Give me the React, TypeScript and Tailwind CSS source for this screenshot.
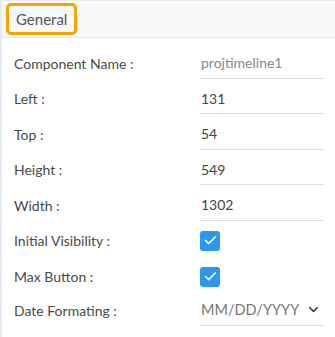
import { Check, ChevronDown } from "lucide-react";

const textRows = [
  { label: "Component Name :", value: "projtimeline1", muted: true },
  { label: "Left :", value: "131" },
  { label: "Top :", value: "54" },
  { label: "Height :", value: "549" },
  { label: "Width :", value: "1302" },
];

export default function App() {
  return (
    <div
      className="w-[335px] h-[337px] bg-white border-l-2 border-[#e3ecf3] text-[14px] text-[#4a4a4a] overflow-hidden"
      style={{ fontFamily: "Lato, 'Noto Sans', sans-serif" }}
    >
      <div className="h-[38px] bg-[#f9f9f9] border-t border-b border-[#e6eaec] flex items-center pl-1">
        <div className="h-[32px] px-[7px] flex items-center border-[3px] border-[#f5a400] rounded-[5px] text-[15px] text-[#555]">
          General
        </div>
      </div>

      <div className="pl-3 pr-[11px] pt-[5px]">
        {textRows.map((r) => (
          <div key={r.label} className="h-[35.5px] flex items-end">
            <div className="w-[186px] h-[28px] pb-[3px] flex items-center">{r.label}</div>
            <div
              className={
                "flex-1 h-[28px] pb-[3px] flex items-center border-b border-[#ddd] px-px " +
                (r.muted ? "text-[#888]" : "text-[#444]")
              }
            >
              {r.value}
            </div>
          </div>
        ))}

        <div className="h-[36px] mt-[2px] flex items-center">
          <div className="w-[186px]">Initial Visibility :</div>
          <div className="w-5 h-5 rounded-[3px] bg-[#2d96ef] flex items-center justify-center">
            <Check size={15} strokeWidth={2.5} className="text-white" />
          </div>
        </div>

        <div className="h-[36px] flex items-center">
          <div className="w-[186px]">Max Button :</div>
          <div className="w-5 h-5 rounded-[3px] bg-[#2d96ef] flex items-center justify-center">
            <Check size={15} strokeWidth={2.5} className="text-white" />
          </div>
        </div>

        <div className="h-[31px] flex items-end">
          <div className="w-[186px] h-[28px] pb-[3px] flex items-center">Date Formating :</div>
          <div className="flex-1 h-[28px] pb-[3px] flex items-center justify-between border-b border-[#ddd] pl-px text-[14.5px] text-[#777]">
            <span>MM/DD/YYYY</span>
            <ChevronDown size={15} strokeWidth={2.5} className="text-[#444] mr-[3px]" />
          </div>
        </div>
      </div>
    </div>
  );
}
